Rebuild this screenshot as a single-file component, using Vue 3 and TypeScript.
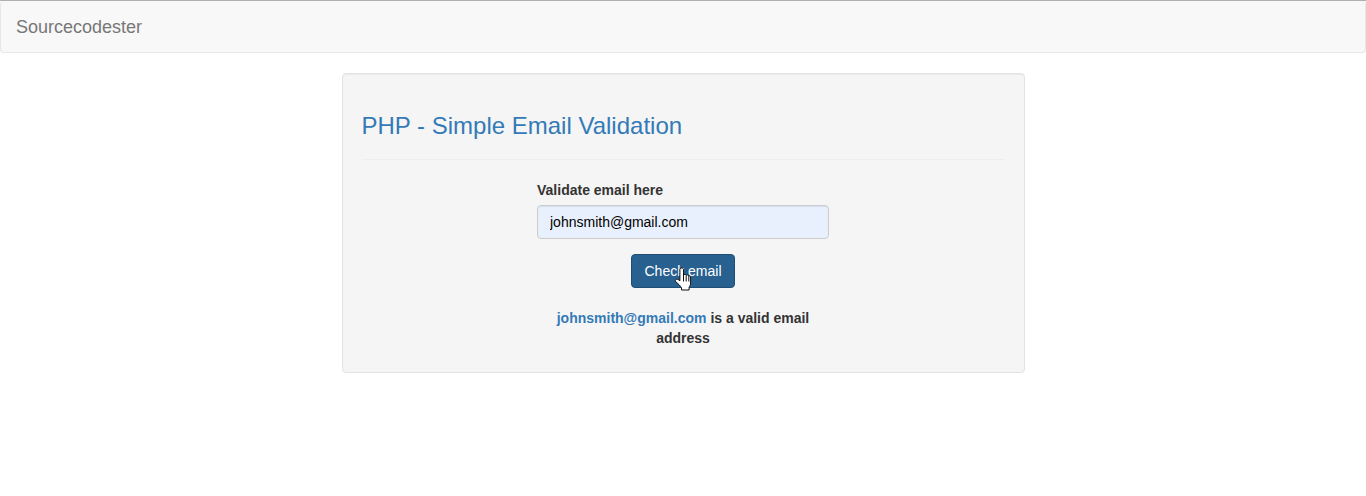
<script setup lang="ts">
const email = 'johnsmith@gmail.com'
</script>

<template>
  <div class="page">
    <nav class="navbar"><span class="brand">Sourcecodester</span></nav>
    <main class="well">
      <h3 class="title">PHP - Simple Email Validation</h3>
      <hr class="rule" />
      <form class="form" @submit.prevent>
        <label class="label" for="email">Validate email here</label>
        <input id="email" class="input" type="text" :value="email" />
        <div class="action">
          <button class="btn" type="submit">Check email</button>
          <svg class="cursor" width="18" height="24" viewBox="0 0 18 24" aria-hidden="true">
            <path d="M7.700 1c1 0 1.800.7 1.800 1.800V8c.3-.8 2.600-.8 2.800.3.400-.6 2.300-.5 2.400.6.500-.3 1.900 0 1.900 1.100V16c0 2-.8 3-1.500 4.200V23H7.500v-2C6.500 19 4 16.500 2 15c-1-.9-.8-2-.1-2.500.9-.6 2.200-.3 4 1.300V2.800C5.900 1.700 6.700 1 7.700 1z" fill="#fff" stroke="#111" stroke-width="1" stroke-linejoin="round" />
            <path d="M9.500 8v6.500M12.200 8.500v6M14.800 9v5.500" stroke="#111" stroke-width="1" fill="none" />
          </svg>
        </div>
        <p class="result"><span class="addr">{{ email }}</span> is a valid email address</p>
      </form>
    </main>
  </div>
</template>

<style>
html, body { margin: 0; background: #fff; }
</style>

<style scoped>
.page {
  font-family: "Liberation Sans", Arial, sans-serif;
  font-size: 14px;
  line-height: 20px;
  color: #333;
  border-top: 1px solid #b0b0b0;
  box-sizing: border-box;
  height: 496px;
  overflow: hidden;
}
.navbar {
  box-sizing: border-box;
  height: 52px;
  background: #f8f8f8;
  border: 1px solid #e7e7e7;
  border-top-width: 0;
  border-radius: 4px;
  padding: 0 15px;
  display: flex;
  align-items: center;
  margin-bottom: 20px;
}
.brand { font-size: 18px; color: #777; }
.well {
  box-sizing: border-box;
  width: 683px;
  height: 300px;
  margin: 0 auto;
  padding: 19px;
  background: #f5f5f5;
  border: 1px solid #e3e3e3;
  border-radius: 4px;
  box-shadow: inset 0 1px 1px rgba(0, 0, 0, .05);
}
.title {
  margin: 20px 0 0;
  font-size: 24px;
  line-height: 26.4px;
  font-weight: 500;
  color: #337ab7;
}
.rule { margin: 20px 0; border: 0; border-top: 1px solid #eee; }
.form {
  width: 292px;
  margin: 0 auto;
  display: flex;
  flex-direction: column;
}
.label { font-weight: 700; margin-bottom: 5px; }
.input {
  box-sizing: border-box;
  width: 100%;
  height: 34px;
  padding: 6px 12px;
  font: inherit;
  color: #000;
  background: #e8f0fe;
  border: 1px solid #ccc;
  border-radius: 4px;
  box-shadow: inset 0 1px 1px rgba(0, 0, 0, .075);
  outline: none;
}
.action { position: relative; margin-top: 15px; display: flex; justify-content: center; }
.btn {
  box-sizing: border-box;
  height: 34px;
  padding: 6px 12px;
  font: inherit;
  color: #fff;
  background: #286090;
  border: 1px solid #204d74;
  border-radius: 4px;
}
.cursor { position: absolute; left: 137px; top: 13px; }
.result { margin: 20px 0 0; text-align: center; font-weight: 700; }
.addr { color: #337ab7; }
</style>
